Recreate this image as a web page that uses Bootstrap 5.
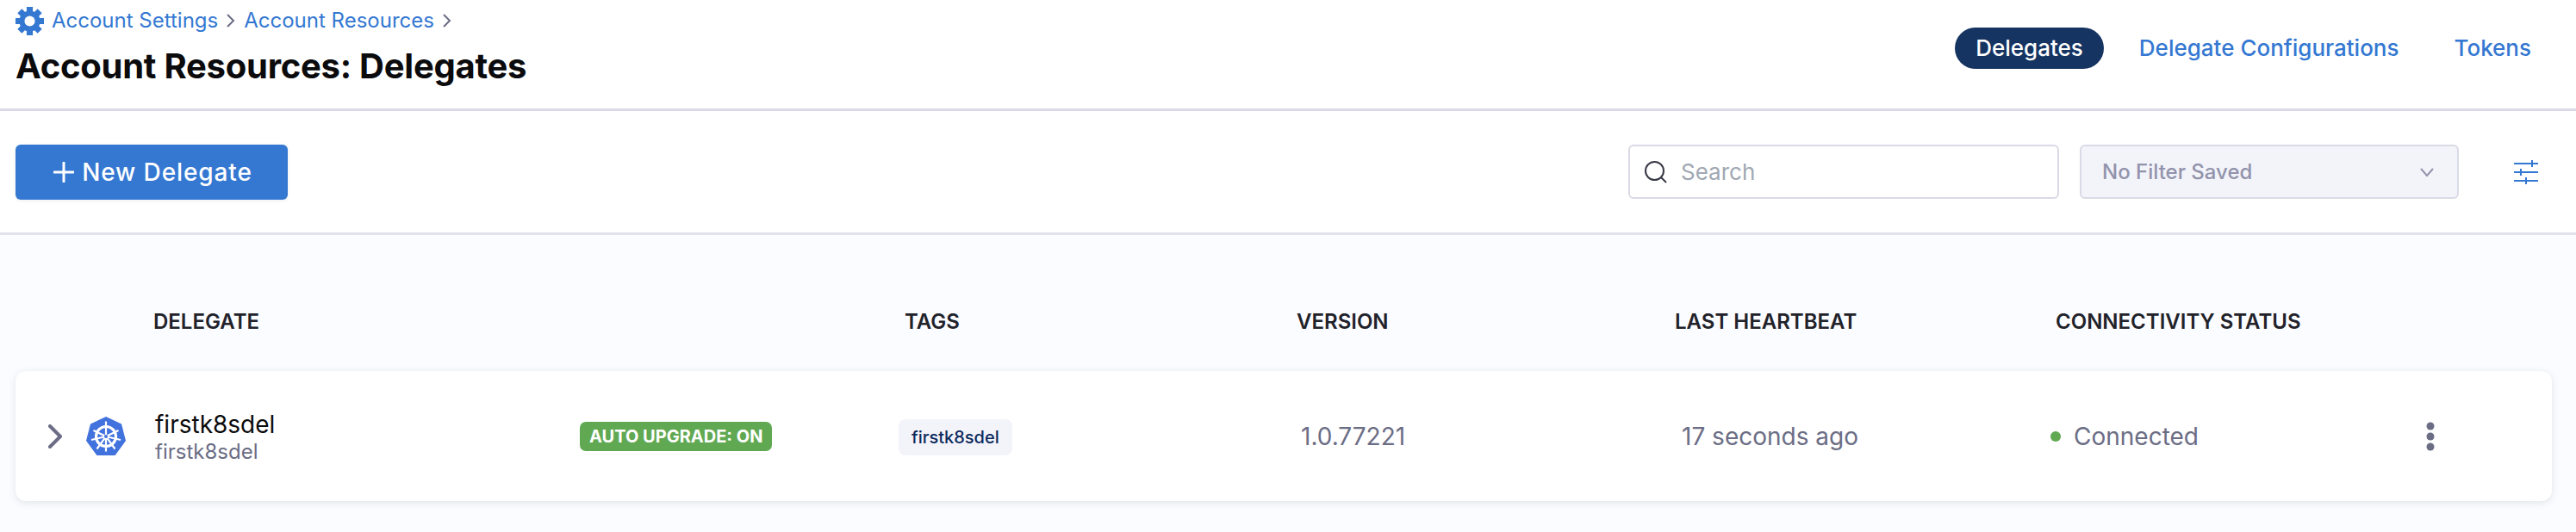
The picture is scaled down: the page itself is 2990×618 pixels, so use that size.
<!DOCTYPE html>
<html lang="en"><head><meta charset="utf-8"><title>Delegates</title>
<link href="https://cdn.jsdelivr.net/npm/bootstrap@5.3.0/dist/css/bootstrap.min.css" rel="stylesheet">
<style>
html,body{height:100%}
body{font-family:Inter,"Liberation Sans",sans-serif;background:#fbfcff;color:#0b0b0d;overflow:hidden}
.page-head{height:129px;background:#fff;border-bottom:3px solid #d9dae5;padding:0 52px 0 18px}
.crumbs{height:48px;font-size:24px;color:#3478d2;gap:10px}
.crumbs svg{flex:none}
.gear-icon{margin-right:-1px}
.crumb-sep{margin:0 -1px}
.page-title{font-size:40px;font-weight:700;line-height:50px;margin:4px 0 0;letter-spacing:-.25px}
.tabs{gap:41px;margin-top:32px}
.tab-on,.tab-off{font-size:26px;font-weight:500;line-height:48px;text-decoration:none;border-radius:24px}
.tab-on{background:#153462;color:#fff;padding:0 24px}
.tab-off{color:#3478d2}
.tab-last{margin-left:23px}
.tool-bar{height:144px;background:#fff;border-bottom:3px solid #e1e2ec;padding:0 44px 0 18px}
.new-btn{width:316px;height:64px;padding:0 0 0 3px;background:#3478d2;border:0;border-radius:6px;color:#fff;font-size:28px;font-weight:500;gap:9px;box-shadow:0 1px 4px rgba(40,41,61,.08);letter-spacing:.9px}
.new-btn:hover{background:#3478d2;color:#fff}
.search-box{width:500px;height:63px;border:2px solid #d9dae5;border-radius:6px;padding:0 16px;gap:15px;color:#a0a8b3;font-size:26px;background:#fff}
.filter-box{width:440px;height:63px;border:2px solid #d9dae5;border-radius:6px;background:#f3f3fa;margin-left:24px;padding:0 26px 0 24px;color:#9293ab;font-size:24px;font-weight:500}
.filter-icon{margin-left:64px;flex:none}
.col-grid{display:grid;grid-template-columns:160px 872px 455px 439px 442px 1fr;align-items:center}
.list-head{height:158px;padding:44px 28px 0 18px;font-size:24px;font-weight:600;color:#22222a;text-transform:uppercase}
.list-head span:first-child{grid-column:2}
.row-card{height:151px;margin:0 28px 0 18px;background:#fff;border-radius:12px;box-shadow:0 2px 8px rgba(96,97,112,.16);color:#6b6d85;font-size:28px}
.row-lead{gap:28px;padding-left:38px}
.hold-name{font-size:28px;color:#0b0b0d;line-height:36px;white-space:nowrap}
.hold-sub{font-size:24px;color:#6b6d85;line-height:28px;white-space:nowrap}
.name-cell{flex:0 0 493px}
.up-badge{display:inline-block;background:#60a952;color:#fff;font-size:20px;font-weight:700;border-radius:7px;padding:0 11px;line-height:34px;white-space:nowrap}
.name-wrap{display:flex;align-items:center;padding-left:2px}
.tag-chip{display:inline-block;background:#f3f3fa;color:#0b2a5c;font-size:20px;font-weight:500;border-radius:8px;padding:0 15px;line-height:42px;margin-left:-7px}
.dot-on{width:12px;height:12px;border-radius:50%;background:#60a952;margin-right:15px;flex:none}
.v-shift{padding-left:5px}
.last-shift{padding-left:8px}
.status-shift{margin-left:-6px}
.kebab-icon{margin-right:135px}
</style></head><body>
<header class="page-head d-flex justify-content-between align-items-start">
  <div>
    <div class="crumbs d-flex align-items-center">
      <svg class="gear-icon" width="33" height="33" viewBox="1 1 30 30"><g stroke="#3478d2" stroke-width="6.500"><path d="M16 1v30M1 16h30M5.400 5.400l21.200 21.200M26.600 5.400L5.400 26.600"/></g><circle cx="16" cy="16" r="11" fill="#3478d2"/><circle cx="16" cy="16" r="5.500" fill="#fff"/></svg>
      <span>Account Settings</span>
      <svg class="crumb-sep" width="12" height="20" viewBox="0 0 12 20"><path d="M2 3l7 7-7 7" fill="none" stroke="#6b6d85" stroke-width="2"/></svg>
      <span>Account Resources</span>
      <svg class="crumb-sep" width="12" height="20" viewBox="0 0 12 20"><path d="M2 3l7 7-7 7" fill="none" stroke="#6b6d85" stroke-width="2"/></svg>
    </div>
    <h1 class="page-title">Account Resources: Delegates</h1>
  </div>
  <nav class="tabs d-flex align-items-center">
    <a class="tab-on" href="#">Delegates</a>
    <a class="tab-off" href="#">Delegate Configurations</a>
    <a class="tab-off tab-last" href="#">Tokens</a>
  </nav>
</header>
<section class="tool-bar d-flex align-items-center">
  <button class="btn new-btn d-flex align-items-center justify-content-center" type="button">
    <svg width="24" height="24" viewBox="0 0 24 24"><path d="M12 1v22M1 12h22" stroke="#fff" stroke-width="3" stroke-linecap="round"/></svg>New Delegate</button>
  <div class="search-box d-flex align-items-center ms-auto">
    <svg width="28" height="28" viewBox="0 0 28 28"><circle cx="12.500" cy="12.500" r="10.500" fill="none" stroke="#383946" stroke-width="2"/><path d="M20 20l6 6" stroke="#383946" stroke-width="2"/></svg>
    <span>Search</span>
  </div>
  <div class="filter-box d-flex align-items-center justify-content-between">
    <span>No Filter Saved</span>
    <svg width="18" height="12" viewBox="0 0 18 12"><path d="M2 2l7 8 7-8" fill="none" stroke="#9293ab" stroke-width="2"/></svg>
  </div>
  <svg class="filter-icon" width="28" height="28" viewBox="0 0 28 28" fill="none" stroke="#3478d2" stroke-width="2"><path d="M0 4h28M0 14h28M0 24h28M21 0v8M8 10v8M14 20v8"/></svg>
</section>
<main>
  <div class="col-grid list-head">
    <span>Delegate</span><span>Tags</span><span>Version</span><span>Last Heartbeat</span><span>Connectivity Status</span>
  </div>
  <div class="col-grid row-card">
    <div class="row-lead d-flex align-items-center">
      <svg width="16" height="28" viewBox="0 0 16 28" class="flex-shrink-0"><path d="M2 2l12 12L2 26" fill="none" stroke="#6b6d85" stroke-width="4" stroke-linecap="round" stroke-linejoin="round"/></svg>
      <svg width="46" height="46" viewBox="0 0 46 46" class="flex-shrink-0"><path fill="#4272dd" d="M23 0l18 8.600 5 19.300L33.600 45H12.400L0 27.900 5 8.600z"/><g fill="none" stroke="#fff"><circle cx="23" cy="23" r="11.500" stroke-width="3.200"/><path stroke-width="2.200" d="M23 5.500v35M23 23l14.500-7M23 23L8.500 16M23 23l17 4M23 23L6 27M23 23l10.500 14.500M23 23L12.500 37.500"/></g><circle cx="23" cy="23" r="2" fill="#4272dd"/></svg>
    </div>
    <div class="name-wrap">
      <div class="name-cell"><div class="hold-name">firstk8sdel</div><div class="hold-sub">firstk8sdel</div></div>
      <span class="up-badge">AUTO UPGRADE: ON</span>
    </div>
    <div><span class="tag-chip">firstk8sdel</span></div>
    <div class="v-shift">1.0.77221</div>
    <div class="last-shift">17 seconds ago</div>
    <div class="status-shift d-flex align-items-center justify-content-between">
      <span class="d-flex align-items-center"><i class="dot-on"></i>Connected</span>
      <svg class="kebab-icon" width="12" height="34" viewBox="0 0 12 34"><circle cx="6" cy="5" r="4.500" fill="#6b6d85"/><circle cx="6" cy="17" r="4.500" fill="#6b6d85"/><circle cx="6" cy="29" r="4.500" fill="#6b6d85"/></svg>
    </div>
  </div>
</main>
<script src="https://cdn.jsdelivr.net/npm/bootstrap@5.3.0/dist/js/bootstrap.bundle.min.js"></script>
</body></html>
